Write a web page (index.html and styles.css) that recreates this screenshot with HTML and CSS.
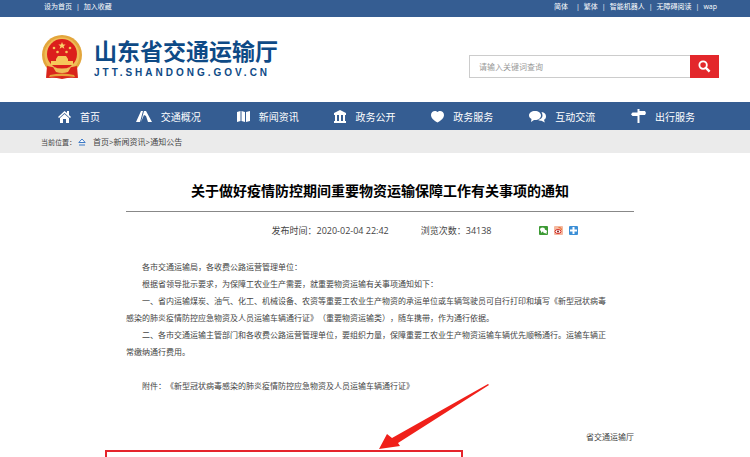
FILE: index.html
```html
<!DOCTYPE html>
<html lang="zh-CN">
<head>
    <meta charset="UTF-8">
    <meta name="viewport" content="width=device-width, initial-scale=1.0">
    <title>山东省交通运输厅</title>
    <link rel="stylesheet" href="styles.css">
</head>
<body>
    <div class="topbar">
        <div class="links">
            <a href="#">设为首页</a><span>|</span><a href="#">加入收藏</a>
        </div>
        <div class="links">
            <a href="#" class="first">简体</a><span>|</span><a href="#">繁体</a><span>|</span><a href="#">智能机器人</a><span>|</span><a href="#">无障碍阅读</a><span>|</span><a href="#">wap</a>
        </div>
    </div>

    <header class="header">
        <a href="#" class="logo">
            <svg class="emblem" viewBox="0 0 40 44">
                <path d="M6 30h28l1 13q-7-1-15 1-8-2-15-1z" fill="#d9251c"/>
                <circle cx="20" cy="20" r="20" fill="#e3a63c"/>
                <circle cx="20" cy="20" r="17.5" fill="#efbd58"/>
                <circle cx="20" cy="19" r="15" fill="#dc1f1c"/>
                <path d="M20 7l1 2.500h2.600l-2 1.700.8 2.600-2.400-1.500-2.400 1.500.8-2.600-2-1.700h2.600z" fill="#fad36b"/>
                <g fill="#f6c75a">
                    <circle cx="12" cy="13" r="1.300"/>
                    <circle cx="28" cy="13" r="1.300"/>
                    <circle cx="15.500" cy="17" r="1.300"/>
                    <circle cx="24.500" cy="17" r="1.300"/>
                    <path d="M14 24l2-3h8l2 3v2h5v4H9v-4h5z"/>
                </g>
                <path d="M5 31q15 4 30 0l1 12q-16-3-32 0z" fill="#d9251c"/>
                <path d="M11 32q9 3 18 0l-3 5q-6 2-12 0z" fill="#efbd58"/>
                <path d="M8 40q12-3 24 0l1 2q-13-2-26 0z" fill="#e8a13a"/>
            </svg>
            <span class="logo-text">
                <strong>山东省交通运输厅</strong>
                <em>JTT.SHANDONG.GOV.CN</em>
            </span>
        </a>
        <form class="search">
            <input type="text" placeholder="请输入关键词查询" aria-label="请输入关键词查询">
            <button type="submit" aria-label="搜索">
                <svg viewBox="0 0 14 14"><circle cx="5.500" cy="5.500" r="4" fill="none" stroke="#fff" stroke-width="2"/><path d="M8.500 8.500l4 4" stroke="#fff" stroke-width="2.500"/></svg>
            </button>
        </form>
    </header>

    <nav class="nav">
        <a href="#"><svg width="13" height="13" viewBox="0 0 13 13"><path d="M6.500 1L0 7l1 1 5.500-5L12 8l1-1-2-2V1H9v2z"/><path d="M6.500 4L2 8v5h3V9h3v4h3V8z"/></svg>首页</a>
        <a href="#"><svg width="16" height="13" viewBox="0 0 16 13"><path d="M5 1h2L4 12H0zM8 1h2l6 11h-4l-2-6-2-1-3 7H5z"/></svg>交通概况</a>
        <a href="#"><svg width="13" height="13" viewBox="0 0 13 13"><path d="M0 2l3.500-1v10L0 12zM4.500 1l3.500 1v10l-3.500-1zM9 2l4-1v10l-4 1z"/></svg>新闻资讯</a>
        <a href="#"><svg width="12" height="13" viewBox="0 0 12 13"><path d="M6 0l6 3v2h-1v6h1v2H0v-2h1V5H0V3zM3 5v6h2V5zM7 5v6h2V5z" fill-rule="evenodd"/></svg>政务公开</a>
        <a href="#"><svg width="13" height="13" viewBox="0 0 13 13"><path d="M6.500 2C8 0 13 .5 13 5c0 3-3 5.500-6.500 7.500C3 10.500 0 8 0 5 0 .5 5 0 6.500 2z"/></svg>政务服务</a>
        <a href="#"><svg width="17" height="13" viewBox="0 0 17 13"><path d="M6 1c3.500 0 6 2 6 4.500S9.500 10 6 10l-1 0-3 2 .5-3C1 8 0 7 0 5.500 0 3 2.500 1 6 1z"/><path d="M12.500 2c3 .5 4.500 2 4.500 4.500 0 1.500-.7 2.500-2 3.300l.8 2.700-3.300-1.800c-1.500.1-2.500-.1-3.500-.7 3-.8 4.500-2.500 4.500-4.500 0-1.300-.4-2.500-1-3.500z"/></svg>互动交流</a>
        <a href="#"><svg width="15" height="14" viewBox="0 0 15 14"><path d="M6.500 0h2v2H14l1 2-1 2H8.500v8h-2V7H1.500L0 5.300 1.500 3.500h5z"/></svg>出行服务</a>
    </nav>

    <div class="crumbs">
        <span>当前位置：</span>
        <svg viewBox="0 0 8 8"><path d="M4 1L.8 4.500h6.400z" fill="#fff" stroke="#3d7ac7"/><path d="M1 7h6" stroke="#3d7ac7"/></svg>
        <div class="path"><a href="#">首页</a>&gt;<a href="#">新闻资讯</a>&gt;<a href="#">通知公告</a></div>
    </div>

    <main class="article">
        <h1>关于做好疫情防控期间重要物资运输保障工作有关事项的通知</h1>
        <div class="meta">
            <span>发布时间：2020-02-04 22:42</span>
            <span>浏览次数：34138</span>
            <div class="share">
                <a href="#" class="wechat" aria-label="微信"><svg viewBox="0 0 9 9"><ellipse cx="3.500" cy="3.500" rx="2.500" ry="2"/><ellipse cx="6" cy="5.500" rx="2" ry="1.800"/><path d="M2 5v2l2-2zM6 7l2 1-1-2z"/></svg></a>
                <a href="#" class="weibo" aria-label="微博"><svg viewBox="0 0 9 9"><ellipse cx="4" cy="5.500" rx="3" ry="2" fill="#fff" stroke="#d8302a"/><circle cx="4" cy="5.500" r="1" fill="#7b1a16"/><path d="M4.500 1.500q3-.5 3 2.500" fill="none" stroke="#e8702a"/></svg></a>
                <a href="#" class="more" aria-label="更多"><svg viewBox="0 0 9 9"><path d="M3.500 1h2v2.500H8v2H5.500V8h-2V5.500H1v-2h2.500z"/></svg></a>
            </div>
        </div>
        <div class="content">
            <p>各市交通运输局，各收费公路运营管理单位：</p>
            <p>根据省领导批示要求，为保障工农业生产需要，就重要物资运输有关事项通知如下：</p>
            <p>一、省内运输煤炭、油气、化工、机械设备、农资等重要工农业生产物资的承运单位或车辆驾驶员可自行打印和填写《新型冠状病毒<br>感染的肺炎疫情防控应急物资及人员运输车辆通行证》（重要物资运输类），随车携带，作为通行依据。</p>
            <p>二、各市交通运输主管部门和各收费公路运营管理单位，要组织力量，保障重要工农业生产物资运输车辆优先顺畅通行。运输车辆正<br>常缴纳通行费用。</p>
            <p class="attachment">附件：《新型冠状病毒感染的肺炎疫情防控应急物资及人员运输车辆通行证》</p>
            <p class="signature">省交通运输厅</p>
        </div>
        <div class="highlight">
            <svg class="arrow" viewBox="0 0 110 66"><path d="M109 0L110 1L19 59L21 62L0 65L8 50L13 54Z" fill="#f0201a"/></svg>
        </div>
    </main>
</body>
</html>
```

FILE: styles.css
```css
* { margin: 0; padding: 0; box-sizing: border-box; }
body {
    display: flex;
    flex-direction: column;
    min-height: 100vh;
    font-family: "Open Sans", "Noto Sans CJK SC", sans-serif;
    font-size: 8px;
    text-spacing-trim: space-all;
    color: #444;
    background: #fff;
}
a { color: inherit; text-decoration: none; }
svg { display: block; flex-shrink: 0; }
.topbar {
    display: flex;
    justify-content: space-between;
    height: 17px;
    padding: 0 33px 0 44px;
    background: #355d92;
    color: #fff;
    font-size: 7px;
    line-height: 14px;
}
.links { display: flex; gap: 4px; }
.links .first { margin-right: 4px; }
.header {
    display: flex;
    justify-content: space-between;
    align-items: flex-start;
    height: 85px;
    padding: 18px 31px 0 42px;
}
.logo { display: flex; gap: 12px; }
.emblem { width: 40px; height: 44px; }
.logo-text { display: flex; flex-direction: column; color: #0e4a86; }
.logo-text strong { font-size: 23px; line-height: 32px; }
.logo-text em {
    font: bold 10px/12px "Liberation Sans", sans-serif;
    letter-spacing: 3px;
}
.search {
    display: flex;
    width: 250px;
    height: 23px;
    margin-top: 20px;
}
.search input {
    flex: 1;
    min-width: 0;
    padding: 0 9px;
    border: 1px solid #ccc;
    border-right: none;
    font: inherit;
    outline: none;
}
.search input::placeholder { color: #999; }
.search button {
    display: flex;
    justify-content: center;
    align-items: center;
    width: 29px;
    border: none;
    background: #e3272b;
    cursor: pointer;
}
.search button svg { width: 13px; height: 13px; }
.nav {
    display: flex;
    justify-content: space-between;
    align-items: center;
    height: 28px;
    padding: 0 55px 0 58px;
    background: #355d92;
    color: #fff;
    font-size: 10px;
}
.nav a { display: flex; align-items: center; gap: 9px; }
.nav svg { fill: #fff; }
.crumbs {
    display: flex;
    align-items: center;
    height: 23px;
    padding-left: 41px;
    background: #ebebeb;
    font-size: 7px;
}
.crumbs svg { width: 8px; height: 8px; margin: 0 7px 0 2px; }
.crumbs .path { font-size: 8px; }
.article {
    position: relative;
    flex: 1;
    margin: 0 116px 0 126px;
}
h1 {
    padding: 27px 0 9px;
    border-bottom: 1px solid #888;
    color: #000;
    font-size: 14px;
    line-height: 22px;
    text-align: center;
}
.meta {
    display: flex;
    justify-content: center;
    align-items: center;
    gap: 32px;
    height: 37px;
    padding-left: 90px;
    font-size: 9px;
}
.share { display: flex; gap: 6px; margin-left: 16px; }
.share a { width: 9px; height: 9px; border-radius: 1px; }
.share svg { fill: #fff; }
.wechat { background: #3d9a35; }
.weibo { background: #f5b9a0; }
.more { background: #3c8fd6; }
.content { padding-top: 9px; line-height: 17px; white-space: nowrap; }
.content p { text-indent: 2em; }
.content .attachment { margin-top: 17px; }
.content .signature { margin-top: 34px; text-align: right; }
.highlight {
    position: absolute;
    top: 297px;
    left: -21px;
    right: 171px;
    bottom: 0;
    border: 2px solid #e5242c;
    border-bottom: none;
}
.arrow {
    position: absolute;
    top: -68px;
    right: -28px;
    width: 110px;
    height: 66px;
}
```
